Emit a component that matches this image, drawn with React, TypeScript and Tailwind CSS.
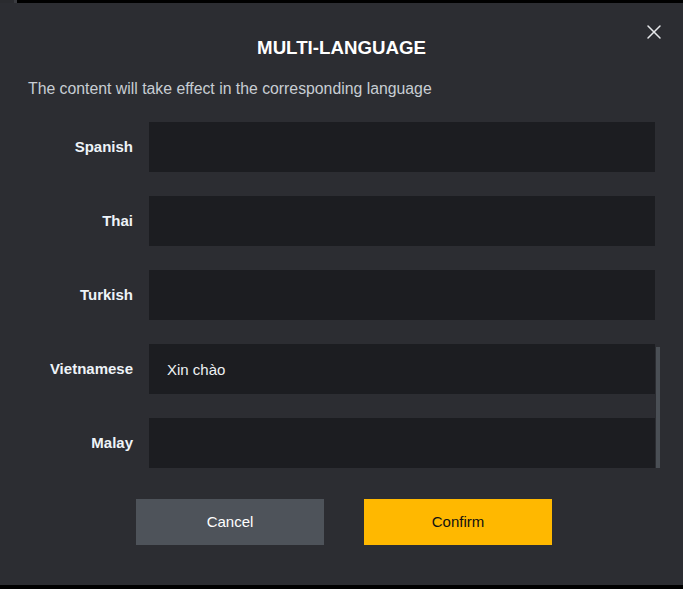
import { X } from 'lucide-react';

const languages = [
  { name: 'Spanish', value: '' },
  { name: 'Thai', value: '' },
  { name: 'Turkish', value: '' },
  { name: 'Vietnamese', value: 'Xin chào' },
  { name: 'Malay', value: '' },
];

export default function App() {
  return (
    <div className="w-[683px] h-[589px] bg-black overflow-hidden font-['Liberation_Sans',Arial,sans-serif]">
      <div className="h-[3px] flex">
        <div className="w-[14px] bg-[#2a2b2f]" />
        <div className="w-[3px] bg-[#3a3b40]" />
      </div>

      <div className="relative h-[582px] bg-[#2c2d32] flex flex-col">
        <button className="absolute right-[17px] top-[17px] text-[#e6e8eb]">
          <X size={24} strokeWidth={1.5} />
        </button>

        <h2 className="pt-[33px] text-center text-[18.7px] leading-[24px] font-bold text-white">
          MULTI-LANGUAGE
        </h2>
        <p className="mt-[19px] px-[28px] text-[15.8px] leading-[20px] text-[#c8cdd4]">
          The content will take effect in the corresponding language
        </p>

        <div className="relative mt-[23px] mx-[28px] flex flex-col gap-[24px]">
          {languages.map((lang) => (
            <div key={lang.name} className="flex items-center gap-[16px]">
              <label className="w-[105px] text-right text-[15px] font-bold text-[#eef3f8]">
                {lang.name}
              </label>
              <input
                defaultValue={lang.value}
                className="h-[50px] flex-1 bg-[#1c1d21] px-[18px] text-[15px] text-[#eef1f4] outline-none"
              />
            </div>
          ))}
          <div className="absolute right-[-5px] bottom-0 w-[4px] h-[121px] bg-[#4a4f55]" />
        </div>

        <div className="mt-[31px] flex justify-center gap-[40px] pl-[5px]">
          <button className="w-[188px] h-[46px] bg-[#4e535a] text-[15px] text-white">Cancel</button>
          <button className="w-[188px] h-[46px] bg-[#ffb800] text-[15px] text-[#111]">Confirm</button>
        </div>
      </div>
    </div>
  );
}
